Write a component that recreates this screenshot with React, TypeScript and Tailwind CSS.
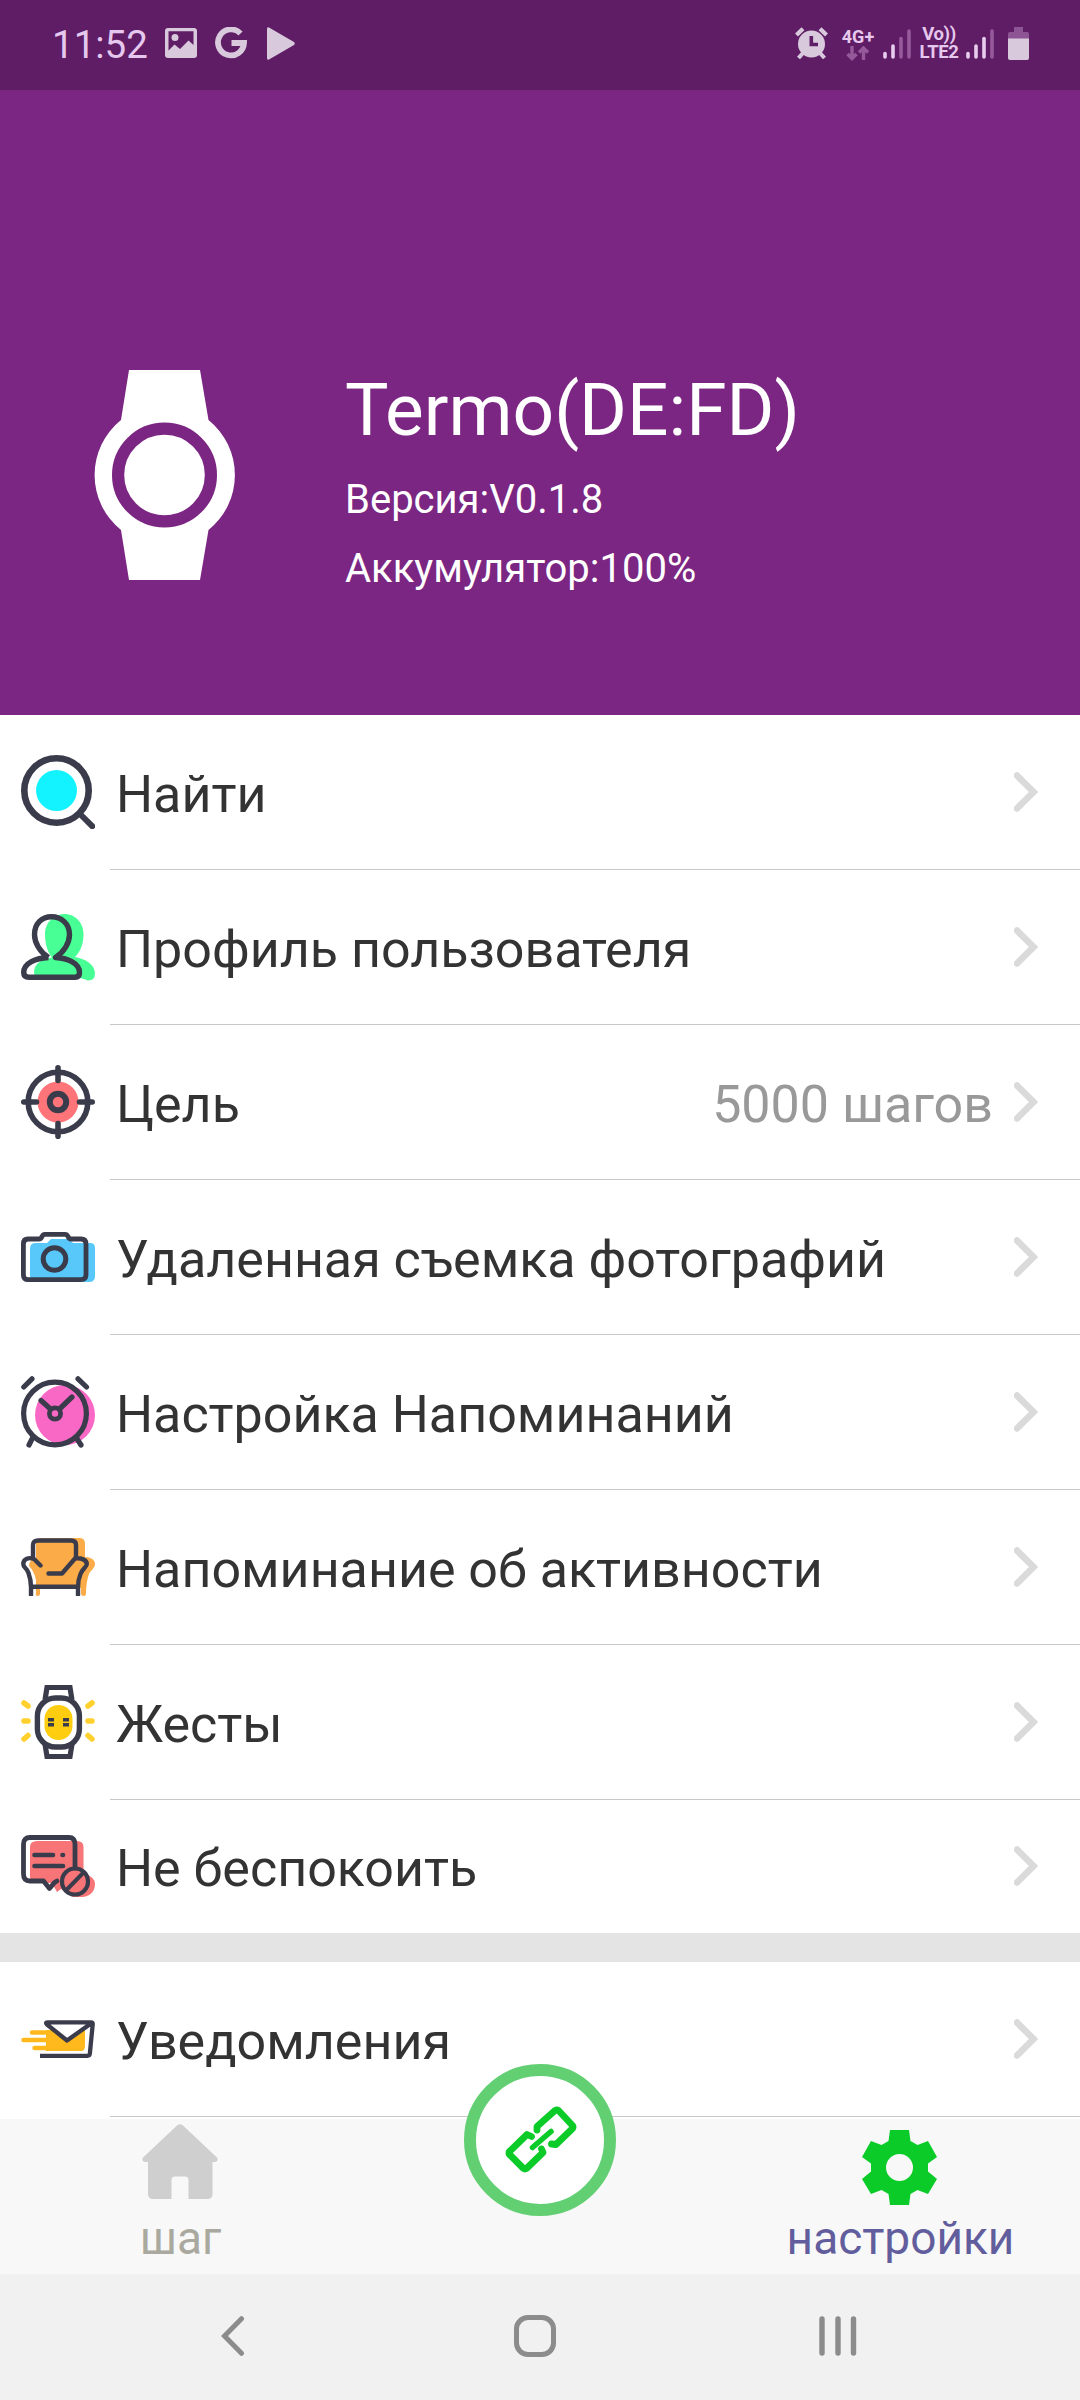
import React from "react";

const INK = "#3a3c4c";

function FindIcon() {
  return (
    <svg width="74" height="74" viewBox="0 0 74 74" fill="none">
      <circle cx="35.5" cy="35.5" r="20.5" fill="#12f3ff" />
      <circle cx="35.5" cy="35.5" r="32.2" stroke={INK} strokeWidth="6.6" />
      <path d="M59 59L71.2 71.2" stroke={INK} strokeWidth="6" strokeLinecap="round" />
    </svg>
  );
}

function UserIcon() {
  const body =
    "M27.500 43.500C19 38 13.500 29 13.500 20.500C13.500 10 20.500 2.700 30.500 2.700S48.500 10 48.500 20.500C48.500 29 43 38 34.500 43.500C46 44 58.500 49 58.500 58.500Q58.500 63.300 54 63.300H8Q2.700 63.300 2.700 58.500C2.700 49 15 44 27.500 43.500";
  return (
    <svg width="74" height="67" viewBox="0 0 74 67" fill="none">
      <path
        d="M43.500 0C54.500 0 62.500 9 62.500 20C62.500 29 60 37 54 43C65 45 74 51 74 59.500Q74 66.500 67 66.500L58 63.500H15Q13 62 13 58C13 51 19 45 31 43.500C26 37 24 29 24 20C24 9 32.500 0 43.500 0Z"
        fill="#48ff96"
      />
      <path d={body} stroke={INK} strokeWidth="5.400" strokeLinejoin="round" />
    </svg>
  );
}

function GoalIcon() {
  return (
    <svg width="74" height="74" viewBox="0 0 74 74" fill="none">
      <circle cx="37" cy="37" r="20.500" fill="#ff7479" />
      <circle cx="37" cy="37" r="29.800" stroke={INK} strokeWidth="5.600" />
      <circle cx="37" cy="37" r="8.200" stroke={INK} strokeWidth="6" />
      <path
        d="M37 2.800V15.500M37 58.500V71.200M2.800 37H15.500M58.500 37H71.200"
        stroke={INK}
        strokeWidth="5.600"
        strokeLinecap="round"
      />
    </svg>
  );
}

function CameraIcon() {
  return (
    <svg width="74" height="50" viewBox="0 0 74 50" fill="none">
      <path
        d="M9 17Q9 11 14 11H26L30 7H48L52 11H69Q74 11 74 16V44Q74 50 68 50H14Q9 50 9 44Z"
        fill="#58c8fa"
      />
      <path
        d="M7 7H18Q20 7 21 4.500Q22 2.400 24 2.400H44Q46 2.400 47 4.500Q48 7 50 7H60Q65 7 65 12V43Q65 47.600 60 47.600H7Q2.400 47.600 2.400 43V12Q2.400 7 7 7Z"
        stroke={INK}
        strokeWidth="4.800"
      />
      <circle cx="33.500" cy="27" r="11.300" stroke={INK} strokeWidth="5" />
    </svg>
  );
}

function AlarmIcon() {
  return (
    <svg width="74" height="72" viewBox="0 0 74 72" fill="none">
      <circle cx="44" cy="39" r="30" fill="#fa68c6" />
      <circle cx="34" cy="37.500" r="31.400" stroke={INK} strokeWidth="5.200" />
      <circle cx="34" cy="37.500" r="5.600" stroke={INK} strokeWidth="4.800" />
      <path
        d="M29.500 33L20 24.500M38.500 33L51 21M2.800 11L11 2.800M57 2.800L65.500 11M11.500 62L8 69M55.500 62L60 69"
        stroke={INK}
        strokeWidth="5.200"
        strokeLinecap="round"
      />
    </svg>
  );
}

function ChairIcon() {
  return (
    <svg width="74" height="58" viewBox="0 0 74 58" fill="none">
      <path
        d="M20 0H59Q64 0 64 6V19C70 19 74 22 74 26C74 30 70 32 68 36Q65 44 65 56Q65 58 62.500 58T60 55V50H19V56Q19 58 16.500 58T15 55V42Q13 33 8 28Q9 20 15 20V6Q15 0 20 0Z"
        fill="#fbab48"
      />
      <path
        d="M12 20V7Q12 2.500 17 2.500H50Q55 2.500 55 7V20M19.500 27.500L13 21C8 19 2.300 20.500 2.300 26C2.300 30 5.500 29 7.500 35Q10 42 10 49V57M27.500 35.500H41L54 20.500C60 19.500 65.800 22 65.800 26C65.800 29 62 30 59.500 36Q57 42 57 49V57M10 48.800H57"
        stroke={INK}
        strokeWidth="4.400"
        strokeLinecap="round"
        strokeLinejoin="round"
      />
    </svg>
  );
}

function GestureIcon() {
  return (
    <svg width="74" height="74" viewBox="0 0 74 74" fill="none">
      <path
        d="M24 15L26 2.500H49L51 15M24 59L26 71.500H49L51 59"
        stroke={INK}
        strokeWidth="5.200"
      />
      <rect x="16.400" y="13" width="42" height="49" rx="18" stroke={INK} strokeWidth="5.400" />
      <rect x="23.500" y="20" width="28" height="35" rx="14" fill="#ffcd10" />
      <path
        d="M27 34.700H33M27 39.700H33M42 34.700H48M42 39.700H48"
        stroke={INK}
        strokeWidth="3.400"
      />
      <path
        d="M3 18L7 21M3 36H7M3 54L7 50.500M71 18L67 21M71 36H67M71 54L67 50.500"
        stroke="#ffd02e"
        strokeWidth="5.500"
        strokeLinecap="round"
      />
    </svg>
  );
}

function DndIcon() {
  return (
    <svg width="74" height="62" viewBox="0 0 74 62" fill="none">
      <path
        d="M16 6H56Q62.500 6 62.500 12V38Q74 42 74 49C74 57 68 62 61 62H52L40 54L36 57L31 48H16Q9 48 9 42V12Q9 6 16 6Z"
        fill="#f77477"
      />
      <path
        d="M54 33V9Q54 2.500 48 2.500H9Q2.500 2.500 2.500 9V39Q2.500 46 9 46H22.500L28.500 53.500L33.500 47.500L36 46"
        stroke={INK}
        strokeWidth="4.800"
        strokeLinejoin="round"
        strokeLinecap="round"
      />
      <path
        d="M13.500 20H32M41.500 20H42M13.500 31H42"
        stroke={INK}
        strokeWidth="4.600"
        strokeLinecap="round"
      />
      <circle cx="54" cy="46.500" r="13" stroke={INK} strokeWidth="4.200" />
      <path d="M45 55.500L63 37" stroke={INK} strokeWidth="4" />
    </svg>
  );
}

function MailIcon() {
  return (
    <svg width="74" height="38" viewBox="0 0 74 38" fill="none">
      <path d="M25 10H64V26Q64 31 60 31H25Z" fill="#ffb91c" />
      <path
        d="M11 12.500H26M2.500 20H26M13.500 28H26"
        stroke="#ffb91c"
        strokeWidth="4.400"
        strokeLinecap="round"
      />
      <path d="M25.500 2.500H71L46 20.500Z" fill="#fff" />
      <path
        d="M19 35.800H66.500Q68.500 35.800 68.800 34L71.700 4.500Q72 2.300 70 2.300H26.500Q24 2.300 26 4.500L46 20.500L70 3.500"
        stroke={INK}
        strokeWidth="4.300"
        strokeLinejoin="round"
      />
    </svg>
  );
}

function Chevron() {
  return (
    <svg className="mb-[2px] ml-[21px] shrink-0" width="24" height="40" viewBox="0 0 24 40" fill="none">
      <path d="M3 3.500L19.500 20L3 36.500" stroke="#dadada" strokeWidth="6.600" strokeLinecap="round" />
    </svg>
  );
}

type RowProps = { icon: React.ReactNode; label: string; value?: string; last?: boolean };

function Row({ icon, label, value, last }: RowProps) {
  return (
    <div className={last ? "flex h-[133px] shrink-0 bg-white" : "flex h-[155px] shrink-0 bg-white"}>
      <div className="flex w-[110px] items-center pb-px pl-[21px]">{icon}</div>
      <div
        className={
          last
            ? "flex flex-1 items-center pr-[42px] pl-[6px]"
            : "flex flex-1 items-center border-b border-[#c8c8c8] pt-px pr-[42px] pl-[6px]"
        }
      >
        <span className="flex-1 pt-1 text-[52px] leading-[60px] whitespace-nowrap text-[#333]">{label}</span>
        {value && (
          <span className="pt-1 text-[52px] leading-[60px] whitespace-nowrap text-[#999]">{value}</span>
        )}
        <Chevron />
      </div>
    </div>
  );
}

const rows: RowProps[] = [
  { icon: <FindIcon />, label: "Найти" },
  { icon: <UserIcon />, label: "Профиль пользователя" },
  { icon: <GoalIcon />, label: "Цель", value: "5000 шагов" },
  { icon: <CameraIcon />, label: "Удаленная съемка фотографий" },
  { icon: <AlarmIcon />, label: "Настройка Напоминаний" },
  { icon: <ChairIcon />, label: "Напоминание об активности" },
  { icon: <GestureIcon />, label: "Жесты" },
  { icon: <DndIcon />, label: "Не беспокоить", last: true },
];

function Signal({ level }: { level: number }) {
  return (
    <svg width="28" height="32" viewBox="0 0 28 32" fill="none">
      {[
        [2, 24.5],
        [10, 17],
        [18, 9.5],
        [26, 2],
      ].map(([x, y], i) => (
        <path
          key={x}
          d={`M${x} ${y + 1}V29`}
          stroke={i < level ? "#e8cdef" : "#965a9b"}
          strokeWidth="3.600"
          strokeLinecap="round"
        />
      ))}
    </svg>
  );
}

function StatusBar() {
  return (
    <div className="flex h-[90px] shrink-0 items-center bg-[#5e1d64] pr-[51px] pl-[52px] text-[#e6c8ee]">
      <span className="w-[113px] text-[38.5px] leading-[46px]">11:52</span>
      <svg className="mt-[-4px]" width="32" height="30" viewBox="0 0 32 30">
        <path
          fillRule="evenodd"
          d="M3 0H29Q32 0 32 3V27Q32 30 29 30H3Q0 30 0 27V3Q0 0 3 0ZM3.500 3.200V22.500L9.500 16.500L15 21L23.500 12.500L28.500 17V3.200Z"
          fill="#d9c9dc"
        />
        <circle cx="10" cy="9.500" r="3.500" fill="#d9c9dc" />
      </svg>
      <svg className="mt-[-4px] ml-[18px]" width="32" height="32" viewBox="0 0 32 32" fill="none">
        <path d="M25.500 6.500A13 13 0 1 0 29 16H16.500" stroke="#d9c9dc" strokeWidth="5.800" />
      </svg>
      <svg className="mt-[-4px] ml-5" width="28" height="33" viewBox="0 0 28 33">
        <path d="M2 .5L27 15Q28.500 16.500 27 18L2 32.500Q0 33.500 0 31V2Q0 -.5 2 .5Z" fill="#d9c9dc" />
      </svg>
      <div className="flex-1" />
      <svg className="mt-[-4px]" width="33" height="32" viewBox="0 0 33 32" fill="none">
        <circle cx="16.500" cy="17" r="13.500" fill="#d9c9dc" />
        <path d="M1.500 8L8 1.800M31.500 8L25 1.800" stroke="#d9c9dc" strokeWidth="4.200" />
        <path d="M8 26L3.500 31M25 26L29.500 31" stroke="#d9c9dc" strokeWidth="4" />
        <path d="M16.300 9V17.500H23" stroke="#5e1d64" strokeWidth="3.600" />
      </svg>
      <div className="mt-[-2px] ml-[12px] flex w-9 flex-col items-center">
        <span className="text-[18px] leading-[19px] font-bold">4G+</span>
        <svg width="24" height="15" viewBox="0 0 24 15" fill="none">
          <path
            d="M6 0V12M1.500 8L6 12.500L10.500 8M17.500 14V2M13 6.500L17.500 2L22 6.500"
            stroke="#965a9b"
            strokeWidth="3.400"
          />
        </svg>
      </div>
      <div className="mt-[-2px] ml-[7px]">
        <Signal level={2} />
      </div>
      <div className="mt-[-4px] ml-[7px] w-[42px] text-center text-[18.5px] leading-[18px] font-bold tracking-[-0.4px] whitespace-nowrap">
        Vo))
        <br />
        LTE2
      </div>
      <div className="mt-[-2px] ml-[6px]">
        <Signal level={3} />
      </div>
      <svg className="mt-[-4px] ml-[14px]" width="21" height="33" viewBox="0 0 21 33">
        <path d="M6 0H15V5H19Q21 5 21 7V12H0V7Q0 5 2 5H6Z" fill="#8e5594" />
        <path d="M0 11.500H21V31Q21 33 19 33H2Q0 33 0 31Z" fill="#d9c9dc" />
      </svg>
    </div>
  );
}

function DeviceHeader() {
  return (
    <div className="flex h-[625px] shrink-0 bg-[#7b2682] pl-[94px] text-white">
      <svg className="mt-[280px]" width="142" height="210" viewBox="0 0 142 210">
        <path
          d="M35 0H106L114.500 50A70.500 70.500 0 0 1 114.500 160L106 210H35L27 160A70.500 70.500 0 0 1 27 50Z"
          fill="#fff"
        />
        <circle cx="70.500" cy="105" r="46.400" fill="none" stroke="#7b2682" strokeWidth="12.200" />
      </svg>
      <div className="mt-[276px] ml-[109px] flex flex-col">
        <span className="text-[73px] leading-[88px]">Termo(DE:FD)</span>
        <span className="mt-[22px] text-[40px] leading-[47px]">Версия:V0.1.8</span>
        <span className="mt-[22px] text-[40px] leading-[47px]">Аккумулятор:100%</span>
      </div>
    </div>
  );
}

function TabBar() {
  return (
    <div className="relative mt-[2px] flex h-[155px] shrink-0 bg-[#f8f8f8]">
      <div className="flex flex-1 flex-col items-center pt-[5px]">
        <svg width="76" height="75" viewBox="0 0 76 75">
          <path
            d="M35 1.500Q38 -1 41 1.500L75 33.500Q77 37.500 73 38H70.500V70Q70.500 75 65.500 75H46.500V56Q46.500 52.500 43 52.500H33Q29.500 52.500 29.500 56V75H11Q6 75 6 70V38H3Q-1 37.500 1 33.500Z"
            fill="#cfcfcf"
          />
        </svg>
        <span className="mt-[12px] pl-px text-[46px] leading-[54px] text-[#aaa9a0]">шаг</span>
      </div>
      <div className="flex-1" />
      <div className="flex flex-1 flex-col items-center pt-[11px]">
        <svg className="mr-px" width="75" height="75" viewBox="-37.500 -37.500 75 75">
          <path
            fillRule="evenodd"
            d="M-9.500 -37.500H9.500L11 -26.500L18 -22.500L28.500 -26.500L37.500 -10.500L28.500 -4V4L37.500 11.500L28.500 26.500L18 22.500L11 26.500L9.500 37.500H-9.500L-11 26.500L-18 22.500L-28.500 26.500L-37.500 11.500L-28.500 4V-4L-37.500 -10.500L-28.500 -26.500L-18 -22.500L-11 -26.500ZM0 -13.500A13.500 13.500 0 1 0 0 13.500A13.500 13.500 0 1 0 0 -13.500Z"
            fill="#0acb27"
          />
        </svg>
        <span className="mt-[6px] pl-px text-[46px] leading-[54px] text-[#625d9c]">настройки</span>
      </div>
      <div className="absolute top-[-55px] left-[464px] flex size-[152px] items-center justify-center rounded-full border-[12.5px] border-[#62cf73] bg-white">
        <svg className="mt-px ml-[2px] shrink-0" width="72" height="70" viewBox="0 0 72 70" fill="none" stroke="#0acb27">
          <g strokeWidth="6.800" strokeLinecap="round" strokeLinejoin="round">
            <path d="M26.500 30.500L22 28.500L4.500 45.500Q3.500 47 4.500 48.500L18.500 62.500Q20 63.500 21.500 62.500L38 46.500L36.500 43" />
            <path d="M32 24V20.500L50 4.500Q52 3.500 53.500 4.500L67.500 19.500Q68.500 21 67.500 22.500L51 38.500L46.500 38" />
            <path d="M27.500 41.500L46 25.500" strokeWidth="5.500" />
          </g>
        </svg>
      </div>
    </div>
  );
}

function NavBar() {
  return (
    <div className="flex h-[126px] shrink-0 items-center bg-[#f1f1f1] pb-px pl-[221px]">
      <svg className="mt-[-2px]" width="24" height="40" viewBox="0 0 24 40" fill="none">
        <path d="M20.500 2.700L3.500 20L20.500 37.300" stroke="#8c8c8c" strokeWidth="5" strokeLinecap="round" />
      </svg>
      <svg className="mt-[-2px] ml-[269px]" width="42" height="42" viewBox="0 0 42 42" fill="none">
        <rect x="2.500" y="2.500" width="37" height="37" rx="11.500" stroke="#8c8c8c" strokeWidth="5" />
      </svg>
      <svg className="mt-[-1px] ml-[263px]" width="38" height="40" viewBox="0 0 38 40" fill="none">
        <path
          d="M3 3V37M19 3V37M34.500 3V37"
          stroke="#8c8c8c"
          strokeWidth="5.400"
          strokeLinecap="round"
        />
      </svg>
    </div>
  );
}

export default function App() {
  return (
    <div className="flex h-[2400px] w-[1080px] flex-col overflow-hidden bg-white font-['Roboto',sans-serif]">
      <StatusBar />
      <DeviceHeader />
      {rows.map((r) => (
        <Row key={r.label} {...r} />
      ))}
      <div className="h-[29px] shrink-0 bg-[#e4e4e4]" />
      <Row icon={<MailIcon />} label="Уведомления" />
      <TabBar />
      <NavBar />
    </div>
  );
}
